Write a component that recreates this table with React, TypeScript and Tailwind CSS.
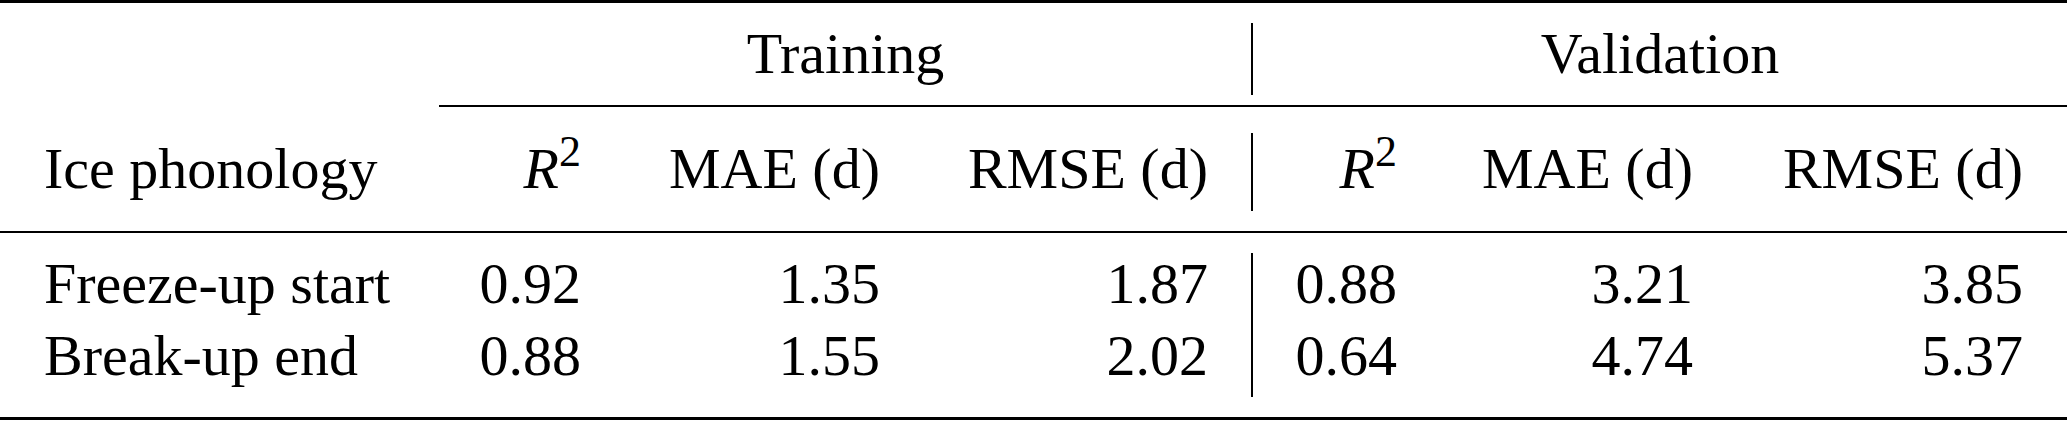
import React from "react"

const rows = [
  { name: "Freeze-up start", values: ["0.92", "1.35", "1.87", "0.88", "3.21", "3.85"] },
  { name: "Break-up end", values: ["0.88", "1.55", "2.02", "0.64", "4.74", "5.37"] },
]

const serif = { fontFamily: '"Liberation Serif", "Times New Roman", serif' }

const R2 = () => (
  <span>
    <span className="italic">R</span>
    <sup className="text-[44px]">2</sup>
  </span>
)

const App = () => {
  return (
    <div
      className="w-[2067px] h-[421px] bg-white text-black text-[58px] leading-[62px] font-['Liberation_Serif']"
      style={serif}
    >
      <div className="h-[3px] bg-black" />

      <div className="grid grid-cols-[396px_141px_299px_328px_43px_2px_144px_296px_330px] px-[44px] mt-[20px] h-[72px]">
        <div />
        <div className="col-span-4 text-center">Training</div>
        <div className="bg-black" />
        <div className="col-span-3 pl-[44px] text-center">Validation</div>
      </div>
      <div className="mt-[10px] ml-[439px] h-[2px] bg-black" />

      <div className="grid grid-cols-[396px_141px_299px_328px_43px_2px_144px_296px_330px] px-[44px] mt-[26px] h-[78px]">
        <div className="pt-[5px]">Ice phonology</div>
        <div className="pt-[5px] text-right"><R2 /></div>
        <div className="pt-[5px] text-right">MAE (d)</div>
        <div className="pt-[5px] text-right">RMSE (d)</div>
        <div />
        <div className="bg-black" />
        <div className="pt-[5px] text-right"><R2 /></div>
        <div className="pt-[5px] text-right">MAE (d)</div>
        <div className="pt-[5px] text-right">RMSE (d)</div>
      </div>
      <div className="mt-[20px] h-[2px] bg-black" />

      <div className="mt-[20px]">
        {rows.map((row) => (
          <div key={row.name} className="grid grid-cols-[396px_141px_299px_328px_43px_2px_144px_296px_330px] px-[44px] h-[72px]">
            <div>{row.name}</div>
            <div className="text-right">{row.values[0]}</div>
            <div className="text-right">{row.values[1]}</div>
            <div className="text-right">{row.values[2]}</div>
            <div />
            <div className="bg-black" />
            <div className="text-right">{row.values[3]}</div>
            <div className="text-right">{row.values[4]}</div>
            <div className="text-right">{row.values[5]}</div>
          </div>
        ))}
      </div>
      <div className="mt-[20px] h-[3px] bg-black" />
    </div>
  )
}

export default App
